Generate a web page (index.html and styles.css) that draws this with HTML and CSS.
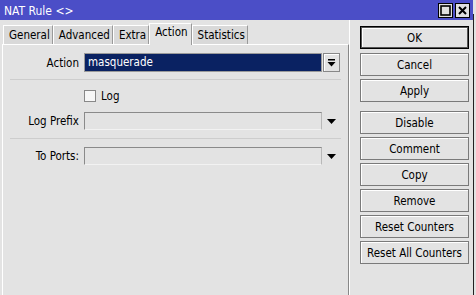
FILE: index.html
```html
<!DOCTYPE html>
<html lang="en">
<head>
  <meta charset="UTF-8" />
  <title>NAT Rule &lt;&gt;</title>
  <link rel="stylesheet" href="styles.css">
</head>
<body>
  <div class="window">
    <div class="titlebar">
      <span class="title">NAT Rule &lt;&gt;</span>
      <div class="title-buttons">
        <span class="tbtn">
          <svg width="11" height="11" viewBox="0 0 11 11"><rect x="1" y="1" width="9" height="9" fill="none" stroke="#000" stroke-width="1.6"/></svg>
        </span>
        <span class="tbtn">
          <svg width="11" height="11" viewBox="0 0 11 11"><path d="M2 2 L9 9 M9 2 L2 9" stroke="#000" stroke-width="2"/></svg>
        </span>
      </div>
    </div>

    <div class="main">
      <div class="left">
        <div class="tabs">
          <span class="tab">General</span>
          <span class="tab">Advanced</span>
          <span class="tab">Extra</span>
          <span class="tab active">Action</span>
          <span class="tab">Statistics</span>
        </div>

        <div class="panel">
          <div class="row row-action">
            <label class="label">Action</label>
            <div class="field selected">masquerade</div>
            <span class="drop-btn">
              <svg width="9" height="8" viewBox="0 0 9 8"><rect x="1" y="0" width="7" height="1.5" fill="#000"/><polygon points="0.5,3 8.5,3 4.5,7.5" fill="#000"/></svg>
            </span>
          </div>

          <div class="sep"></div>

          <div class="row row-check">
            <span class="check"></span>
            <span class="check-text">Log</span>
          </div>

          <div class="row row-prefix">
            <label class="label">Log Prefix</label>
            <div class="field"></div>
            <span class="arrow">
              <svg width="9" height="5" viewBox="0 0 9 5"><polygon points="0,0 9,0 4.5,5" fill="#000"/></svg>
            </span>
          </div>

          <div class="sep sep-2"></div>

          <div class="row row-ports">
            <label class="label">To Ports:</label>
            <div class="field"></div>
            <span class="arrow">
              <svg width="9" height="5" viewBox="0 0 9 5"><polygon points="0,0 9,0 4.5,5" fill="#000"/></svg>
            </span>
          </div>
        </div>
      </div>

      <div class="buttons">
        <button class="btn default">OK</button>
        <button class="btn">Cancel</button>
        <button class="btn">Apply</button>
        <button class="btn gap">Disable</button>
        <button class="btn">Comment</button>
        <button class="btn">Copy</button>
        <button class="btn">Remove</button>
        <button class="btn">Reset Counters</button>
        <button class="btn">Reset All Counters</button>
      </div>
    </div>
  </div>
  <div class="edge"></div>
</body>
</html>
```

FILE: styles.css
```css
:root {
  --bg: #e3e3e3;
  --title-bg: #4b4ec7;
  --border-dark: #8a8a8a;
  --border-light: #ffffff;
  --selected: #0a2262;
}

body {
  margin: 0;
  width: 476px;
  height: 295px;
  overflow: hidden;
  display: flex;
  background: var(--bg);
  font-family: "DejaVu Sans Condensed", "DejaVu Sans", sans-serif;
  font-size: 11.5px;
  color: #000;
}

.window {
  width: 473px;
  height: 295px;
  display: flex;
  flex-direction: column;
}

.edge {
  width: 3px;
  height: 295px;
  box-sizing: border-box;
  border-left: 1px solid #222;
  margin-top: 14px;
}

/* Title bar */
.titlebar {
  height: 20px;
  background: var(--title-bg);
  display: flex;
  align-items: center;
  padding-left: 4px;
}

.title {
  color: #fff;
  font-size: 12px;
  flex: 1;
  padding-top: 2px;
}

.title-buttons {
  display: flex;
  gap: 2px;
  margin-right: 3px;
  margin-top: 1px;
}

.tbtn {
  width: 15px;
  height: 15px;
  box-sizing: border-box;
  background: #e0e0e0;
  border: 1px solid #000;
  display: flex;
  align-items: center;
  justify-content: center;
}

/* Main area */
.main {
  flex: 1;
  display: flex;
}

.left {
  width: 347px;
  padding-left: 2px;
  display: flex;
  flex-direction: column;
}

.tabs {
  display: flex;
  height: 21px;
  margin-top: 3px;
  padding-left: 1px;
  align-items: flex-end;
}

.tab {
  height: 19px;
  box-sizing: border-box;
  padding: 2px 2px 0 5px;
  background: #d9d9d9;
  border-left: 1px solid var(--border-light);
  border-top: 1px solid var(--border-light);
  border-right: 1px solid #9a9a9a;
  white-space: nowrap;
}

.tab.active {
  height: 22px;
  margin-bottom: -1px;
  background: var(--bg);
  padding: 1px 3px 0 5px;
  position: relative;
}

.panel {
  flex: 1;
  border-top: 1px solid var(--border-light);
  border-left: 1px solid var(--border-light);
  border-right: 1px solid #888;
}

.row {
  display: flex;
  align-items: center;
}

.label {
  width: 76px;
  text-align: right;
  margin-right: 5px;
  white-space: nowrap;
}

.field {
  width: 238px;
  height: 18px;
  box-sizing: border-box;
  border: 1px solid var(--border-dark);
  border-right-color: #b8b8b8;
  border-bottom-color: #f2f2f2;
}

.field.selected {
  height: 19px;
  background: var(--selected);
  color: #fff;
  padding: 1px 0 0 3px;
  border-color: #9a9a9a;
}

.row-action {
  margin-top: 8px;
}

.drop-btn {
  width: 17px;
  height: 19px;
  margin-left: 1px;
  box-sizing: border-box;
  border: 1px solid #888;
  box-shadow: inset 1px 1px 0 #fff;
  display: flex;
  align-items: center;
  justify-content: center;
}

.arrow {
  margin-left: 5px;
  display: flex;
  padding-top: 1px;
}

.sep {
  height: 1px;
  background: #cdcdcd;
  margin: 7px 7px 0 7px;
}

.row-check {
  margin-top: 9px;
  padding-left: 81px;
}

.check {
  width: 12px;
  height: 12px;
  box-sizing: border-box;
  background: #f7f7f7;
  border: 1px solid #888;
}

.check-text {
  margin-left: 5px;
}

.row-prefix {
  margin-top: 9px;
}

.sep-2 {
  margin-top: 8px;
}

.row-ports {
  margin-top: 8px;
}

/* Right buttons column */
.buttons {
  flex: 1;
  display: flex;
  flex-direction: column;
  gap: 3px;
  padding: 6px 0 0 10px;
  border-left: 1px solid #fff;
}

.btn {
  width: 109px;
  height: 23px;
  box-sizing: border-box;
  margin: 0;
  padding: 0;
  font: inherit;
  color: #000;
  background: var(--bg);
  border: 1px solid #7a7a7a;
  box-shadow: inset 1px 1px 0 #fff;
  white-space: nowrap;
}

.btn.default {
  border: 1px solid #000;
  box-shadow: inset 0 0 0 1px #555, inset 2px 2px 0 #fff;
  margin-bottom: 1px;
}

.btn.gap {
  margin-top: 6px;
}
```
